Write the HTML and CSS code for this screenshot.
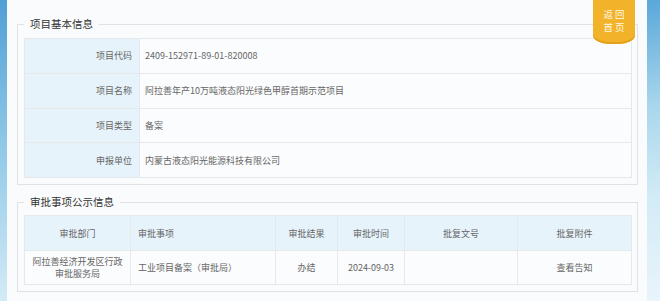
FILE: index.html
```html
<!DOCTYPE html>
<html lang="zh">
<head>
<meta charset="utf-8">
<link rel="stylesheet" href="styles.css">
</head>
<body>
<div class="page">
  <div class="strip strip-left"></div>
  <div class="main">
    <a class="home-badge"><span>返回</span><span>首页</span></a>
    <fieldset class="box">
      <legend class="box-title">项目基本信息</legend>
      <table class="info">
        <tr><th>项目代码</th><td>2409-152971-89-01-820008</td></tr>
        <tr><th>项目名称</th><td>阿拉善年产10万吨液态阳光绿色甲醇首期示范项目</td></tr>
        <tr><th>项目类型</th><td>备案</td></tr>
        <tr><th>申报单位</th><td>内蒙古液态阳光能源科技有限公司</td></tr>
      </table>
    </fieldset>
    <fieldset class="box box-second">
      <legend class="box-title">审批事项公示信息</legend>
      <table class="approve">
        <colgroup>
          <col class="c1"><col class="c2"><col class="c3"><col class="c4"><col class="c5"><col class="c6">
        </colgroup>
        <tr class="head">
          <th>审批部门</th><th class="left">审批事项</th><th>审批结果</th><th>审批时间</th><th>批复文号</th><th>批复附件</th>
        </tr>
        <tr class="row">
          <td class="dept">阿拉善经济开发区行政<br>审批服务局</td>
          <td class="left">工业项目备案（审批局）</td>
          <td>办结</td>
          <td>2024-09-03</td>
          <td></td>
          <td>查看告知</td>
        </tr>
      </table>
    </fieldset>
  </div>
  <div class="strip strip-right"></div>
</div>
</body>
</html>
```

FILE: styles.css
```css
* { box-sizing: border-box; }
html, body { margin: 0; padding: 0; }
body {
  width: 660px;
  height: 301px;
  overflow: hidden;
  font-family: "Noto Sans CJK SC", "Noto Sans", sans-serif;
  font-size: 9px;
  color: #666;
  background: #fafbfc;
}
.page {
  display: flex;
  height: 301px;
}
.strip { flex: none; height: 100%; }
.strip-left {
  width: 7px;
  background: linear-gradient(to bottom, #4f9fd5 0%, #8cc6e6 45%, #d3ebf6 100%);
}
.strip-right {
  width: 13px;
  background: linear-gradient(to bottom, #5aa8da 0%, #a9d6ec 35%, #d2ebf6 65%, #e9f4fb 100%);
}
.main {
  position: relative;
  flex: none;
  width: 640px;
  padding: 17px 9px 0 10px;
  background: #fafbfc;
}
.home-badge {
  position: absolute;
  left: 586px;
  top: 0;
  width: 42px;
  height: 44px;
  display: flex;
  flex-direction: column;
  align-items: center;
  justify-content: center;
  padding-bottom: 3px;
  background: #f2b32a;
  border-radius: 0 0 16px 16px / 0 0 9px 9px;
  box-shadow: inset 0 -2px 0 #e3a21c;
  color: #fff7e6;
  font-size: 9.5px;
  line-height: 13px;
  letter-spacing: 2px;
  text-indent: 2px;
}
.box {
  margin: 0;
  padding: 7px 5px 6px 6px;
  border: 1px solid #e0e2e4;
  min-width: 0;
}
.box-second { margin-top: 10px; padding-top: 6px; }
.box-title {
  padding: 0 6px;
  font-size: 10.5px;
  line-height: 14px;
  color: #333;
}
table {
  width: 100%;
  border-collapse: collapse;
  table-layout: fixed;
}
th, td {
  border: 1px solid #e6e8ea;
  font-weight: normal;
  padding: 0;
}
.info th {
  width: 115px;
  height: 34.75px;
  text-align: right;
  padding-right: 7px;
  background: #e6f3fb;
}
.info td {
  padding-left: 5px;
  background: #fbfcfd;
}
.approve .c1 { width: 106px; }
.approve .c2 { width: 145px; }
.approve .c3 { width: 62px; }
.approve .c4 { width: 67px; }
.approve .c5 { width: 113px; }
.approve .head th {
  height: 35px;
  background: #e6f3fb;
  text-align: center;
}
.approve .row td {
  height: 34px;
  text-align: center;
  background: #fbfcfd;
  line-height: 12px;
}
.approve .left { text-align: left !important; padding-left: 7px; }
```
